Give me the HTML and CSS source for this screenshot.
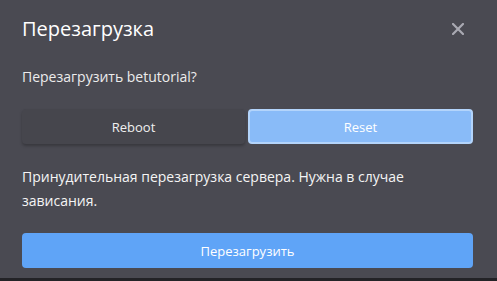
FILE: index.html
```html
<!DOCTYPE html>
<html lang="ru">
<head>
<meta charset="UTF-8">
<meta name="viewport" content="width=device-width, initial-scale=1.0">
<title>Перезагрузка</title>
<link rel="stylesheet" href="styles.css">
</head>
<body>

<div class="modal">
  <div class="modal-head">
    <div class="title">Перезагрузка</div>
    <button class="close">
      <svg width="12" height="12" viewBox="0 0 12 12">
        <path d="M1 1L11 11M11 1L1 11" stroke="#a9a9b2" stroke-width="2.2" stroke-linecap="square"/>
      </svg>
    </button>
  </div>

  <div class="question">Перезагрузить betutorial?</div>

  <div class="tabs">
    <button class="tab">Reboot</button>
    <button class="tab active">Reset</button>
  </div>

  <p class="desc">Принудительная перезагрузка сервера. Нужна в случае зависания.</p>

  <button class="submit">Перезагрузить</button>
</div>

</body>
</html>
```

FILE: styles.css
```css
body {
  margin: 0;
  font-family: "Open Sans", "Noto Sans", sans-serif;
  background: #232327;
}

.modal {
  background: #4a4a52;
  height: 278px;
  box-sizing: border-box;
  padding: 16px 24px 0 22px;
  color: #f2f2f2;
}

.modal-head {
  display: flex;
  justify-content: space-between;
  align-items: center;
  height: 26px;
}

.title {
  font-size: 20px;
  line-height: 26px;
  color: #fff;
}

.close {
  background: none;
  border: none;
  padding: 0;
  margin-right: 9px;
  display: flex;
  cursor: pointer;
}

.question {
  margin-top: 25px;
  font-size: 14px;
  line-height: 20px;
  color: #ececec;
}

.tabs {
  display: flex;
  gap: 3px;
  margin-top: 22px;
}

.tab {
  flex: 1;
  height: 35px;
  border: 1px solid transparent;
  border-radius: 4px;
  background: #46464d;
  color: #f0f0f0;
  font-family: inherit;
  font-size: 13px;
  box-shadow: 0 2px 3px rgba(0,0,0,0.25);
}

.tab.active {
  background: #89bbf8;
  border: 2px solid #b3d4fb;
  color: #fff;
  box-shadow: none;
}

.desc {
  margin: 21px 0 0;
  font-size: 14px;
  line-height: 24px;
  color: #f5f5f5;
}

.submit {
  display: block;
  width: 100%;
  height: 35px;
  margin-top: 20px;
  border: none;
  border-radius: 4px;
  background: #5fa4f7;
  color: #fff;
  font-family: inherit;
  font-size: 13px;
}
```
